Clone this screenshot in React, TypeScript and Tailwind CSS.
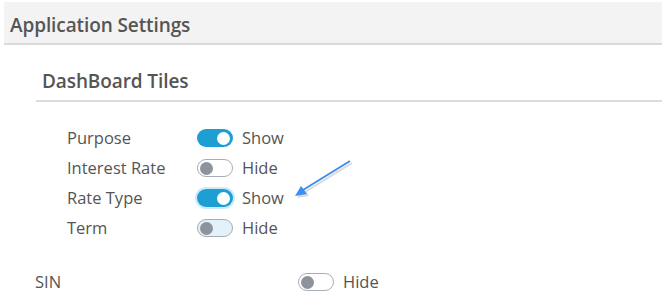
import React from "react";

type Row = { label: string; on: boolean; variant?: "focus" | "light" };

const rows: Row[] = [
  { label: "Purpose", on: true },
  { label: "Interest Rate", on: false },
  { label: "Rate Type", on: true, variant: "focus" },
  { label: "Term", on: false, variant: "light" },
];

function Toggle({ on, variant }: { on: boolean; variant?: "focus" | "light" }) {
  if (on) {
    return (
      <span
        className={`relative inline-flex h-[18px] w-[36px] items-center rounded-full bg-[#1d9fd4] ${
          variant === "focus" ? "shadow-[0_0_0_2px_#cfe9f7]" : ""
        }`}
      >
        <span className="absolute right-[3px] h-[13px] w-[13px] rounded-full bg-white" />
      </span>
    );
  }
  return (
    <span
      className={`relative inline-flex h-[18px] w-[36px] items-center rounded-full border border-[#a8adb3] ${
        variant === "light" ? "bg-[#e3f1fa]" : "bg-white"
      }`}
    >
      <span className="absolute left-[2px] h-[13px] w-[13px] rounded-full bg-[#8c939c]" />
    </span>
  );
}

export default function App() {
  return (
    <div className="h-[297px] w-[662px] bg-white font-['Open_Sans',sans-serif] text-[#555]">
      {/* Header */}
      <div className="pt-[2px] pl-[4px]">
        <div className="flex h-[43px] items-center border-b-2 border-[#d9d9d9] bg-[#f3f3f3] pt-[5px] pl-[6px] text-[19px] font-semibold tracking-[-0.1px]">
          Application Settings
        </div>
      </div>

      {/* DashBoard Tiles */}
      <div className="pl-[36px]">
        <div className="flex h-[57px] items-end border-b-2 border-[#dcdcdc] pb-[5px] pl-[6px] text-[19px] font-semibold tracking-[-0.1px]">
          DashBoard Tiles
        </div>
      </div>

      <div className="relative flex flex-col pt-[21px] pl-[67px] text-[16.5px]">
        {rows.map((r) => (
          <div key={r.label} className="flex h-[30px] items-center">
            <span className="w-[130px]">{r.label}</span>
            <Toggle on={r.on} variant={r.variant} />
            <span className="ml-[9px]">{r.on ? "Show" : "Hide"}</span>
          </div>
        ))}

        {/* annotation arrow */}
        <svg
          className="absolute left-[290px] top-[48px]"
          width="70"
          height="54"
          viewBox="0 0 70 54"
        >
          <g opacity="0.22" transform="translate(2,2)">
            <line x1="60" y1="11" x2="13" y2="40" stroke="#555" strokeWidth="2" />
            <polygon points="5,46 11,36 17,44" fill="#555" />
          </g>
          <line x1="60" y1="11" x2="13" y2="40" stroke="#3d8ef2" strokeWidth="2" />
          <polygon points="5,46 11,36 17,44" fill="#3d8ef2" />
        </svg>
      </div>

      <div className="mt-[24px] flex h-[30px] items-center pl-[35px] text-[16.5px]">
        <span className="w-[263px]">SIN</span>
        <Toggle on={false} />
        <span className="ml-[9px]">Hide</span>
      </div>
    </div>
  );
}
